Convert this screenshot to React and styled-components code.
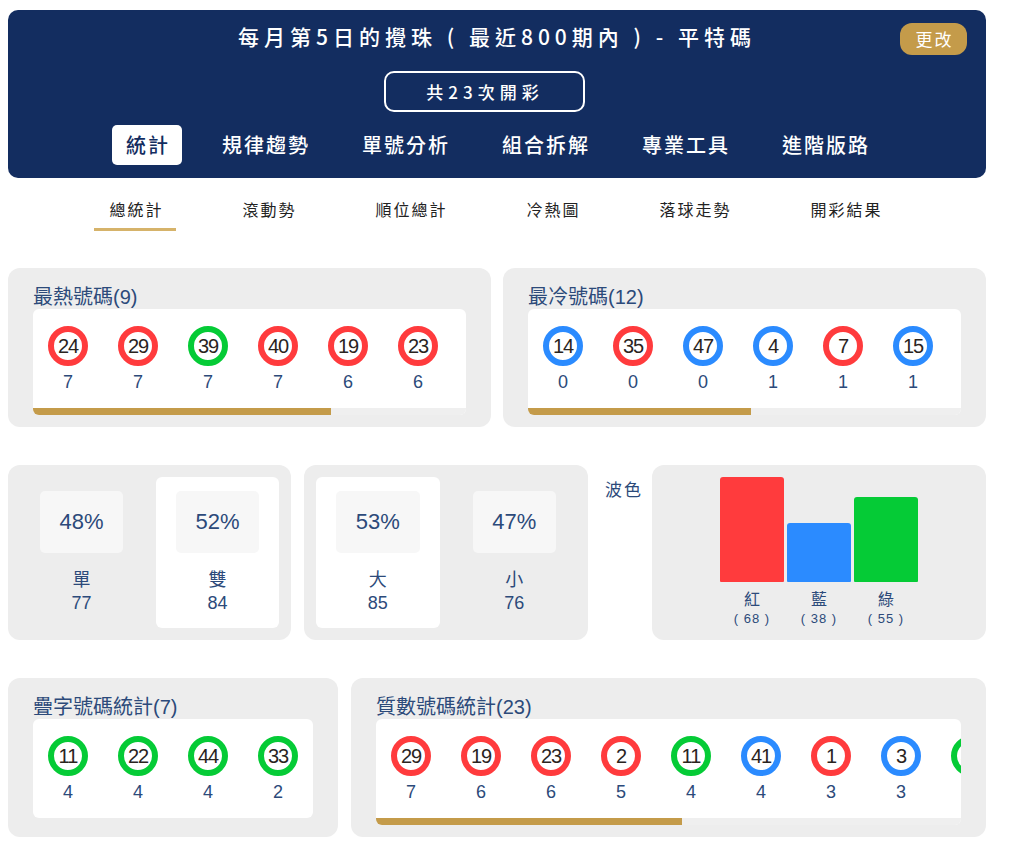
import styled, { createGlobalStyle } from "styled-components";

const GlobalStyle = createGlobalStyle`
  body {
    margin: 0;
    background: #ffffff;
    font-family: "Liberation Sans", "Noto Sans CJK TC", sans-serif;
  }
  * {
    box-sizing: border-box;
  }
`;

const RED = "#ff3b3d";
const BLUE = "#2b8bff";
const GREEN = "#05cb36";

const redNums = [1, 2, 7, 8, 12, 13, 18, 19, 23, 24, 29, 30, 34, 35, 40, 45, 46];
const blueNums = [3, 4, 9, 10, 14, 15, 20, 25, 26, 31, 36, 37, 41, 42, 47, 48];

function ballColor(n) {
  if (redNums.includes(n)) return RED;
  if (blueNums.includes(n)) return BLUE;
  return GREEN;
}

const ITEM_WIDTH = 70;

const mainTabs = ["統計", "規律趨勢", "單號分析", "組合拆解", "專業工具", "進階版路"];
const subTabs = ["總統計", "滾動勢", "順位總計", "冷熱圖", "落球走勢", "開彩結果"];

// only the balls that are in view; total is the full list length for the scroll thumb
const hotList = [
  [24, 7], [29, 7], [39, 7], [40, 7], [19, 6], [23, 6],
];
const coldList = [
  [14, 0], [35, 0], [47, 0], [4, 1], [7, 1], [15, 1],
];
const doubleList = [
  [11, 4], [22, 4], [44, 4], [33, 2],
];
const primeList = [
  [29, 7], [19, 6], [23, 6], [2, 5], [11, 4], [41, 4], [1, 3], [3, 3], [43, 3],
];

const waveColors = [
  { name: "紅", value: 68, color: RED },
  { name: "藍", value: 38, color: BLUE },
  { name: "綠", value: 55, color: GREEN },
];

function NumberCard({ title, list, total, viewWidth }) {
  const ratio = viewWidth / (total * ITEM_WIDTH);
  return (
    <Card>
      <CardTitle>{title}</CardTitle>
      <Panel>
        <Strip>
          {list.map(([num, count]) => (
            <BallItem key={num}>
              <Ball $color={ballColor(num)}>{num}</Ball>
              <Count>{count}</Count>
            </BallItem>
          ))}
        </Strip>
        {ratio < 1 && (
          <Track>
            <Thumb style={{ width: `${ratio * 100}%` }} />
          </Track>
        )}
      </Panel>
    </Card>
  );
}

function SplitCard({ items }) {
  return (
    <StatCard>
      {items.map((item) => (
        <StatColumn key={item.label} $active={item.active}>
          <Percent>{item.percent}</Percent>
          <StatLabel>{item.label}</StatLabel>
          <StatCount>{item.count}</StatCount>
        </StatColumn>
      ))}
    </StatCard>
  );
}

export default function App() {
  return (
    <>
      <GlobalStyle />
      <Page>
        <Header>
          <TitleRow>
            <span />
            <Title>每月第5日的攪珠 ( 最近800期內 ) - 平特碼</Title>
            <ChangeButton>更改</ChangeButton>
          </TitleRow>
          <DrawBox>共23次開彩</DrawBox>
          <MainTabs>
            {mainTabs.map((tab, i) => (
              <MainTab key={tab} $active={i === 0}>
                {tab}
              </MainTab>
            ))}
          </MainTabs>
        </Header>

        <SubTabs>
          {subTabs.map((tab, i) => (
            <SubTab key={tab} $active={i === 0}>
              {tab}
            </SubTab>
          ))}
        </SubTabs>

        <TwoCol>
          <NumberCard title="最熱號碼(9)" list={hotList} total={9} viewWidth={433} />
          <NumberCard title="最冷號碼(12)" list={coldList} total={12} viewWidth={433} />
        </TwoCol>

        <StatRow>
          <SplitCard
            items={[
              { label: "單", percent: "48%", count: 77 },
              { label: "雙", percent: "52%", count: 84, active: true },
            ]}
          />
          <SplitCard
            items={[
              { label: "大", percent: "53%", count: 85, active: true },
              { label: "小", percent: "47%", count: 76 },
            ]}
          />
          <WaveSection>
            <WaveLabel>波色</WaveLabel>
            <WaveCard>
              {waveColors.map((w) => (
                <BarColumn key={w.name}>
                  <BarSlot>
                    <Bar $color={w.color} $height={w.value * 1.544} />
                  </BarSlot>
                  <BarName>{w.name}</BarName>
                  <BarValue>( {w.value} )</BarValue>
                </BarColumn>
              ))}
            </WaveCard>
          </WaveSection>
        </StatRow>

        <BottomRow>
          <NumberCard title="疊字號碼統計(7)" list={doubleList} total={4} viewWidth={280} />
          <NumberCard title="質數號碼統計(23)" list={primeList} total={16} viewWidth={585} />
        </BottomRow>
      </Page>
    </>
  );
}

const Page = styled.div`
  width: 978px;
  margin-left: 8px;
  padding: 10px 0 20px;
`;

const Header = styled.div`
  background: #132d60;
  border-radius: 10px;
  padding: 13px 19px 13px;
  display: flex;
  flex-direction: column;
  align-items: center;
  font-family: "Noto Sans CJK TC", "Liberation Sans", sans-serif;
  color: #ffffff;
`;

const TitleRow = styled.div`
  width: 100%;
  display: grid;
  grid-template-columns: 1fr auto 1fr;
  align-items: center;
`;

const Title = styled.div`
  font-size: 21px;
  font-weight: 500;
  letter-spacing: 5px;
  line-height: 28px;
  margin-top: -6px;
  white-space: pre;
`;

const ChangeButton = styled.div`
  justify-self: end;
  width: 67px;
  height: 32px;
  border-radius: 12px;
  background: #c49b4a;
  font-size: 17px;
  letter-spacing: 2px;
  line-height: 32px;
  text-align: center;
  padding-left: 2px;
`;

const DrawBox = styled.div`
  margin: 16px 25px 0 0;
  width: 201px;
  height: 41px;
  border: 2px solid #ffffff;
  border-radius: 10px;
  display: flex;
  align-items: center;
  justify-content: center;
  font-size: 17px;
  font-weight: 500;
  letter-spacing: 5px;
  padding-left: 1px;
`;

const MainTabs = styled.div`
  margin-top: 13px;
  display: flex;
  gap: 26px;
`;

const MainTab = styled.div`
  height: 40px;
  padding: 0 12px 0 14px;
  border-radius: 5px;
  font-size: 20px;
  font-weight: 500;
  letter-spacing: 2px;
  line-height: 40px;
  background: ${(p) => (p.$active ? "#ffffff" : "transparent")};
  color: ${(p) => (p.$active ? "#132d60" : "#ffffff")};
`;

const SubTabs = styled.div`
  margin-top: 12px;
  display: flex;
  justify-content: center;
  gap: 51px;
  padding-right: 4px;
`;

const SubTab = styled.div`
  padding: 8px 13px 8px 15px;
  font-family: "Noto Sans CJK TC", sans-serif;
  font-size: 16px;
  font-weight: 400;
  letter-spacing: 2px;
  line-height: 22px;
  color: #222222;
  border-bottom: 3px solid ${(p) => (p.$active ? "#d6b36a" : "transparent")};
`;

const TwoCol = styled.div`
  margin-top: 37px;
  display: grid;
  grid-template-columns: 1fr 1fr;
  gap: 12px;
`;

const Card = styled.div`
  background: #ededed;
  border-radius: 12px;
  padding: 18px 25px 12px;
  min-width: 0;
`;

const CardTitle = styled.div`
  font-size: 20px;
  line-height: 23px;
  color: #2c4a7a;
`;

const Panel = styled.div`
  background: #ffffff;
  border-radius: 6px;
  overflow: hidden;
`;

const Strip = styled.div`
  display: flex;
  padding: 17px 0 15px;
`;

const BallItem = styled.div`
  width: ${ITEM_WIDTH}px;
  flex-shrink: 0;
  display: flex;
  flex-direction: column;
  align-items: center;
`;

const Ball = styled.div`
  width: 40px;
  height: 40px;
  border-radius: 50%;
  border: 6px solid ${(p) => p.$color};
  background: #ffffff;
  display: flex;
  align-items: center;
  justify-content: center;
  font-size: 20px;
  letter-spacing: -1px;
  color: #2a241e;
`;

const Count = styled.div`
  margin-top: 5px;
  font-size: 18px;
  line-height: 22px;
  color: #2c4a7a;
`;

const Track = styled.div`
  height: 7px;
  background: #efefef;
`;

const Thumb = styled.div`
  height: 100%;
  background: #c49b4a;
`;

const StatRow = styled.div`
  margin-top: 38px;
  display: grid;
  grid-template-columns: 283px 284px 1fr;
  gap: 13px;
`;

const StatCard = styled.div`
  background: #ededed;
  border-radius: 12px;
  padding: 12px;
  display: grid;
  grid-template-columns: 1fr 1fr;
  gap: 13px;
`;

const StatColumn = styled.div`
  background: ${(p) => (p.$active ? "#ffffff" : "transparent")};
  border-radius: 6px;
  padding: 14px 20px 13px;
  display: flex;
  flex-direction: column;
  align-items: center;
`;

const Percent = styled.div`
  width: 100%;
  height: 62px;
  background: #f7f7f7;
  border-radius: 5px;
  display: flex;
  align-items: center;
  justify-content: center;
  font-size: 22px;
  color: #2c4a7a;
`;

const StatLabel = styled.div`
  margin-top: 15px;
  font-size: 18px;
  line-height: 24px;
  color: #2c4a7a;
`;

const StatCount = styled.div`
  font-size: 18px;
  line-height: 22px;
  color: #2c4a7a;
`;

const WaveSection = styled.div`
  display: flex;
  justify-content: flex-end;
  gap: 9px;
`;

const WaveLabel = styled.div`
  margin-top: 14px;
  font-size: 17px;
  letter-spacing: 2px;
  line-height: 24px;
  color: #2c4a7a;
`;

const WaveCard = styled.div`
  width: 334px;
  background: #ededed;
  border-radius: 12px;
  padding: 12px 0;
  display: flex;
  justify-content: center;
  gap: 3px;
`;

const BarColumn = styled.div`
  width: 64px;
  display: flex;
  flex-direction: column;
  align-items: center;
`;

const BarSlot = styled.div`
  width: 100%;
  height: 105px;
  display: flex;
  align-items: flex-end;
`;

const Bar = styled.div`
  width: 100%;
  height: ${(p) => p.$height}px;
  background: ${(p) => p.$color};
  border-radius: 3px 3px 1px 1px;
`;

const BarName = styled.div`
  margin-top: 8px;
  font-size: 16px;
  line-height: 20px;
  color: #2c4a7a;
`;

const BarValue = styled.div`
  font-size: 13px;
  line-height: 18px;
  letter-spacing: 1px;
  color: #2c4a7a;
  white-space: pre;
`;

const BottomRow = styled.div`
  margin-top: 38px;
  display: grid;
  grid-template-columns: 330px 1fr;
  gap: 13px;
`;
